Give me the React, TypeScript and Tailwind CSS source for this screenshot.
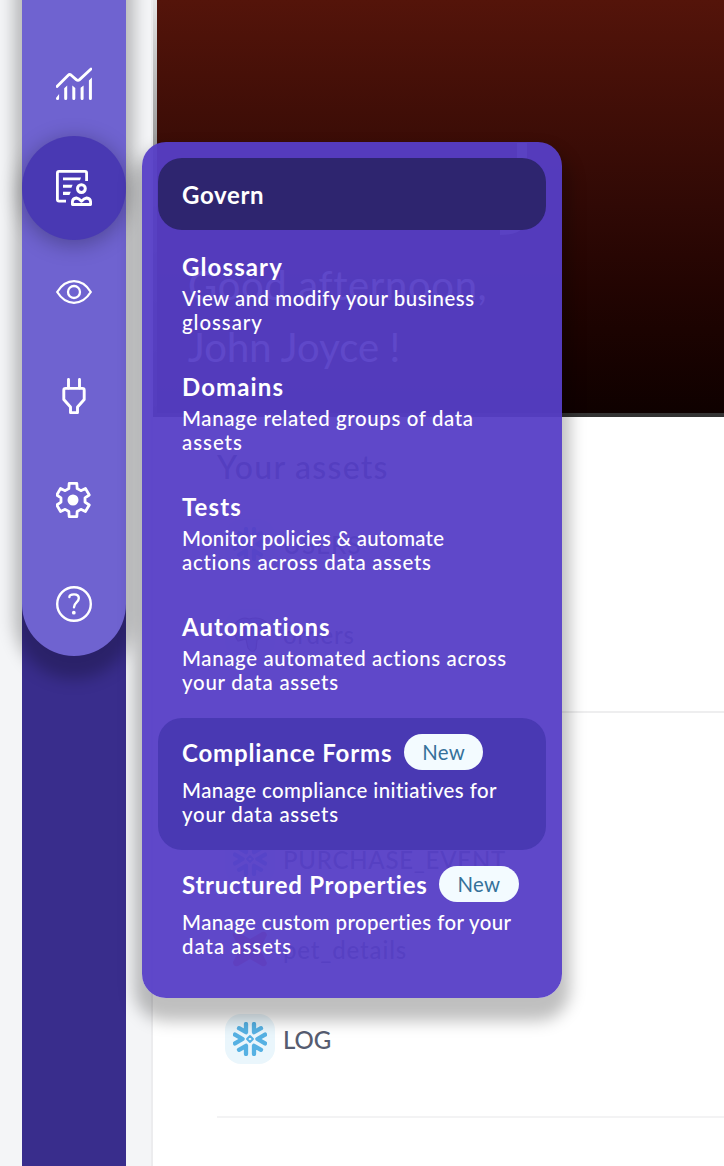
import type { ReactNode } from "react";

function ChartIcon() {
  return (
    <svg width="36" height="36" viewBox="0 0 36 36" fill="none">
      <g transform="translate(0 1)">
        <path d="M1 19.5 12.2 8.2Q13.5 7 15 8L20.2 12.6Q22 14 23.6 12.6L35 2" stroke="white" strokeWidth="2.8" strokeLinecap="round" />
        <path d="M0 31 3.1 27V31.4Q3.1 33 1.6 33 0 33 0 31.4ZM8.2 21.2 11.2 18.6V31.5Q11.2 33 9.7 33 8.2 33 8.2 31.5ZM16.3 18.6 19.3 21V31.5Q19.3 33 17.8 33 16.3 33 16.3 31.5ZM24.6 20.8 27.6 18.4V31.5Q27.6 33 26.1 33 24.6 33 24.6 31.5ZM32.9 13.4 35.9 10.6V31.5Q35.9 33 34.4 33 32.9 33 32.9 31.5Z" fill="white" />
      </g>
    </svg>
  );
}

function GovernIcon() {
  return (
    <svg width="36" height="36" viewBox="0 0 36 36" fill="none" stroke="white" strokeLinecap="butt">
      <path d="M10 31.2H3Q1.4 31.2 1.4 29.6V3Q1.4 1.4 3 1.4H29Q30.6 1.4 30.6 3V11" strokeWidth="2.8" />
      <path d="M7 7.5H25L24 10.3H7ZM7 14.7H16.6L15.4 17.8H7ZM7 21.8H14.8L13.4 25.1H7Z" fill="white" stroke="none" />
      <circle cx="25.4" cy="18.6" r="3.9" strokeWidth="3" />
      <path d="M16.4 34.5V31.6Q16.6 28.6 20.4 28 23 28.4 25.5 31.2 28 28.4 30.6 28 34.4 28.6 34.6 31.6V34.5Z" strokeWidth="2.8" strokeLinejoin="round" />
    </svg>
  );
}

function EyeIcon() {
  return (
    <svg width="36" height="36" viewBox="0 0 36 36" fill="none" stroke="white" strokeWidth="2.3" strokeLinejoin="round">
      <path d="M1.2 18Q8 7.2 18 7.2T34.8 18Q28 28.8 18 28.8T1.2 18Z" />
      <circle cx="18" cy="18" r="6" />
    </svg>
  );
}

function PlugIcon() {
  return (
    <svg width="36" height="36" viewBox="0 0 36 36" fill="none" stroke="white" strokeWidth="2.9">
      <path d="M12.5 10V1.4M23.5 10V1.4" strokeLinecap="round" />
      <path d="M9.5 10.4H26.5Q28.2 10.4 28.2 12.2V21.5L21.5 29V34.6H14.5V29L7.8 21.5V12.2Q7.8 10.4 9.5 10.4Z" strokeLinejoin="round" />
    </svg>
  );
}

const gearPoints = Array.from({ length: 6 }, (_, i) =>
  [[-20, 12.2], [-13, 17], [13, 17], [20, 12.2]].map(([offset, radius]) => {
    const angle = ((i * 60 - 90 + offset) * Math.PI) / 180;
    return `${(17 + radius * Math.cos(angle)).toFixed(2)},${(18 + radius * Math.sin(angle)).toFixed(2)}`;
  }).join(" "),
).join(" ");

function GearIcon() {
  return (
    <svg width="36" height="36" viewBox="0 0 36 36" fill="none">
      <polygon points={gearPoints} stroke="white" strokeWidth="2.8" strokeLinejoin="round" />
      <circle cx="17" cy="18" r="5.5" fill="white" />
    </svg>
  );
}

function HelpIcon() {
  return (
    <svg width="36" height="36" viewBox="0 0 36 36" fill="none">
      <circle cx="18" cy="18" r="16.8" stroke="white" strokeWidth="2.4" />
      <path d="M13.4 11.1C13.4 9.2 15.4 8.4 18 8.4 21 8.4 22.8 10 22.8 12.3 22.8 16.3 18 16.6 18 21.2" stroke="white" strokeWidth="2.4" strokeLinecap="round" />
      <circle cx="17.8" cy="26.7" r="1.9" fill="white" />
    </svg>
  );
}

function SnowflakeIcon() {
  return (
    <svg width="34" height="34" viewBox="0 0 34 34" fill="none" stroke="#56b1e3" strokeWidth="4.3" strokeLinecap="round" strokeLinejoin="round">
      <path d="M6 6.2 13 10.2V2M28 6.2 21 10.2V2M6 27.8 13 23.8V32M28 27.8 21 23.8V32M2 12.6 9.6 17 2 21.4M32 12.6 24.4 17 32 21.4" />
      <path d="M17 14 20 17 17 20 14 17Z" strokeWidth="1.9" />
    </svg>
  );
}

function PostgresIcon() {
  return (
    <svg width="36" height="36" viewBox="0 0 36 36">
      <path d="M3 8Q9 0 17 3 27 0 34 6 36 15 31 20L25 24 24 33Q20 38 16 32L14 23 6 25Q1 18 3 8Z" fill="#8aa5be" stroke="#555" strokeWidth="1.2" />
    </svg>
  );
}

function DbtIcon() {
  return (
    <svg width="36" height="36" viewBox="0 0 36 36">
      <path d="M2 1Q4 0 6 1L18 8 30 1Q34 0 35 4L28 18 35 32Q34 36 30 35L18 28 6 35Q1 36 1 31L8 18 1 5Q0 2 2 1Z" fill="#ff694a" />
    </svg>
  );
}

function Badge() {
  return (
    <span className="flex h-9 w-[79.5px] items-center justify-center rounded-full bg-[#f3fbff] text-[20.4px] tracking-[0.3px] text-[#35719a]">
      New
    </span>
  );
}

type ItemProps = { title: string; spacing: string; isNew?: boolean; active?: boolean; children: ReactNode };

function MenuItem({ title, spacing, isNew, active, children }: ItemProps) {
  return (
    <div className={`rounded-3xl px-6 pt-4 pb-[24.5px] ${active ? "bg-[#4939b3]" : ""}`}>
      <div className={`flex items-center gap-[11.5px] ${isNew ? "h-9" : "h-6"}`}>
        <span className={`pt-px text-2xl font-bold ${spacing}`}>{title}</span>
        {isNew && <Badge />}
      </div>
      <div className="mt-[7.5px] text-[20.4px] leading-6 font-medium">{children}</div>
    </div>
  );
}

function AssetRow({ name, spacing, tile, children }: { name: string; spacing: string; tile: string; children: ReactNode }) {
  return (
    <div className="flex h-[90px] items-center gap-2">
      <div className={`flex size-[50px] items-center justify-center rounded-2xl ${tile}`}>{children}</div>
      <span className={`pt-px text-2xl font-medium text-[#565c70] ${spacing}`}>{name}</span>
    </div>
  );
}

export default function App() {
  return (
    <div className="relative flex h-[1166px] w-[724px] overflow-hidden bg-[#f4f5f7] font-['Lato','Liberation_Sans',sans-serif] whitespace-nowrap">
      <nav className="-mt-12 ml-[22px] w-[104px] shrink-0 bg-[#392d8c]">
        <div className="flex h-[704px] flex-col items-center rounded-b-[52px] bg-[#6f63d0] pt-20 shadow-[0_15px_16px_8px_rgba(0,0,0,0.25)]">
          <div className="flex size-[104px] items-center justify-center"><ChartIcon /></div>
          <div className="flex size-[104px] items-center justify-center rounded-full bg-[#4939b3] shadow-[0_4px_20px_2px_rgba(0,0,0,0.26)]"><GovernIcon /></div>
          <div className="flex size-[104px] items-center justify-center"><EyeIcon /></div>
          <div className="flex size-[104px] items-center justify-center"><PlugIcon /></div>
          <div className="flex size-[104px] items-center justify-center"><GearIcon /></div>
          <div className="flex size-[104px] items-center justify-center"><HelpIcon /></div>
        </div>
      </nav>

      <main className="ml-[25px] flex-1 border-l-2 border-[#ececee] bg-white">
        <div className="h-[417px] bg-linear-to-b from-[#e6e6e6] via-[#8f8f8f] via-40% to-[#333333] pb-1 pl-1">
          <div className="relative h-full bg-linear-to-b from-[#54140a] via-[#300905] via-50% to-[#0f0100] pt-[254px] pl-[31px] text-[40px] leading-[62px] text-white">
            <svg className="absolute top-[143px] left-[343px]" width="28" height="93" viewBox="0 0 28 93" fill="none">
              <path d="M22 0V73Q22 87 0 87" stroke="white" strokeOpacity="0.5" strokeWidth="10" />
            </svg>
            <div className="tracking-[0.65px]">Good afternoon,</div>
            <div className="tracking-[0.05px]">John Joyce !</div>
          </div>
        </div>
        <div className="ml-16 h-[296px] border-b-2 border-[#eeeeef] pt-[25px]">
          <div className="h-[57px] text-[32px] leading-[50px] font-medium tracking-[1.25px] text-[#33384c]">Your assets</div>
          <div className="pl-2">
            <AssetRow name="USERS" spacing="tracking-[1.2px]" tile="bg-[#eaf6fc]"><SnowflakeIcon /></AssetRow>
            <AssetRow name="orders" spacing="tracking-[0.7px]" tile="bg-[#eaf0f5]"><PostgresIcon /></AssetRow>
          </div>
        </div>
        <div className="ml-16 h-[405px] border-b-2 border-[#f3f3f4] pt-[101px] pl-2">
          <AssetRow name="PURCHASE_EVENT" spacing="tracking-[0.75px]" tile="bg-[#eaf6fc]"><SnowflakeIcon /></AssetRow>
          <AssetRow name="pet_details" spacing="tracking-[0.85px]" tile="bg-[#fff4f2]"><DbtIcon /></AssetRow>
          <AssetRow name="LOG" spacing="tracking-[-0.1px]" tile="bg-[#eaf6fc]"><SnowflakeIcon /></AssetRow>
        </div>
      </main>

      <div className="absolute top-[142px] left-[142px] w-[420px] rounded-3xl bg-[#563ec6]/95 p-4 text-white shadow-[0_15px_16px_8px_rgba(0,0,0,0.25)]">
        <div className="mb-2 flex h-[72px] items-center rounded-3xl bg-[#2e256f] px-6 pt-px text-2xl font-bold tracking-[0.65px]">Govern</div>
        <MenuItem title="Glossary" spacing="tracking-[1.12px]">
          <div className="tracking-[0.52px]">View and modify your business</div>
          <div className="tracking-[0.96px]">glossary</div>
        </MenuItem>
        <MenuItem title="Domains" spacing="tracking-[1.1px]">
          <div className="tracking-[0.64px]">Manage related groups of data</div>
          <div className="tracking-[1px]">assets</div>
        </MenuItem>
        <MenuItem title="Tests" spacing="tracking-[1.1px]">
          <div className="tracking-[0.25px]">Monitor policies &amp; automate</div>
          <div className="tracking-[0.76px]">actions across data assets</div>
        </MenuItem>
        <MenuItem title="Automations" spacing="tracking-[1px]">
          <div className="tracking-[0.65px]">Manage automated actions across</div>
          <div className="tracking-[0.77px]">your data assets</div>
        </MenuItem>
        <MenuItem title="Compliance Forms" spacing="tracking-[0.85px]" isNew active>
          <div className="tracking-[0.44px]">Manage compliance initiatives for</div>
          <div className="tracking-[0.77px]">your data assets</div>
        </MenuItem>
        <MenuItem title="Structured Properties" spacing="tracking-[0.75px]" isNew>
          <div className="tracking-[0.41px]">Manage custom properties for your</div>
          <div className="tracking-[1px]">data assets</div>
        </MenuItem>
      </div>
    </div>
  );
}
